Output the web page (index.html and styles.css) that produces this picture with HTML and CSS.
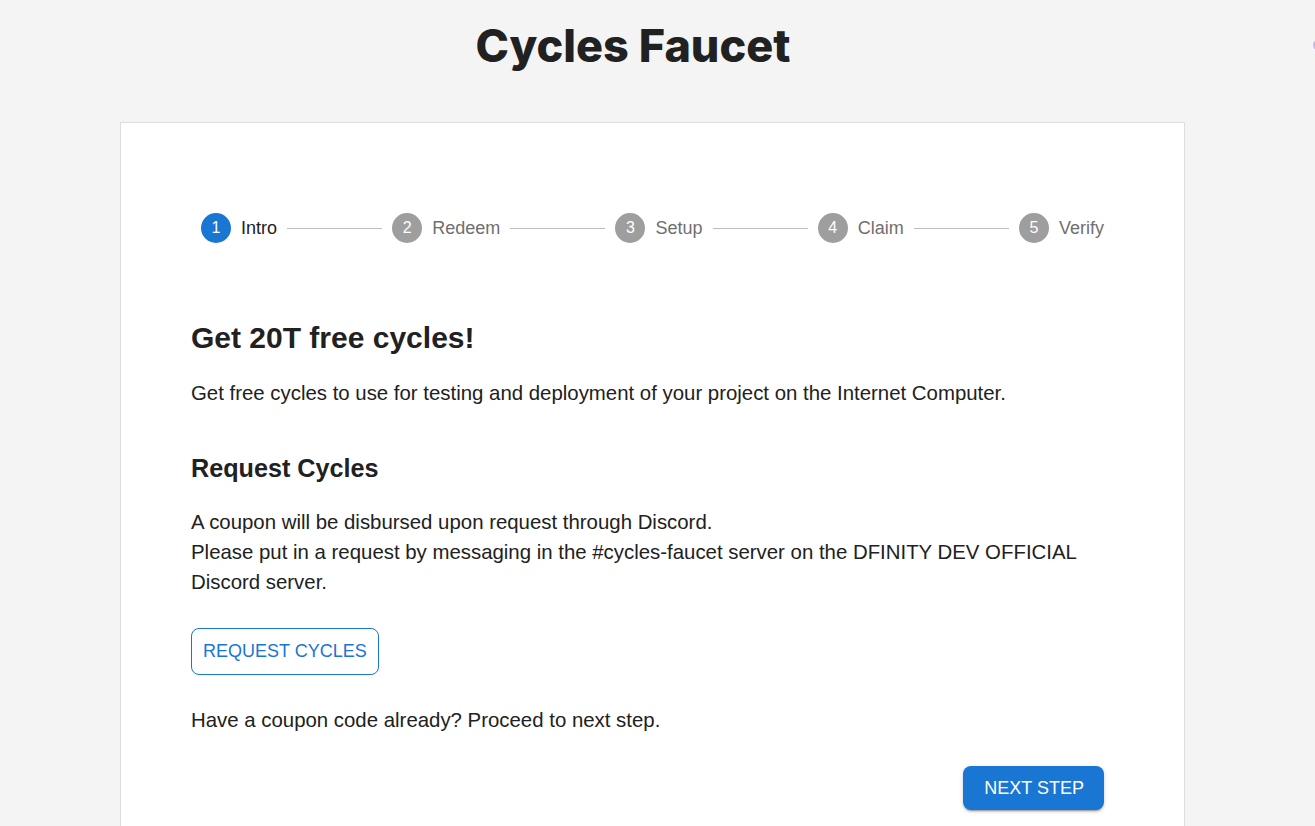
FILE: index.html
```html
<!DOCTYPE html>
<html lang="en">
<head>
<meta charset="utf-8">
<title>Cycles Faucet</title>
<link rel="stylesheet" href="styles.css">
</head>
<body>
<div class="edge-dot"></div>
<header class="top">
  <h1 class="title">Cycles Faucet</h1>
</header>
<main class="card">
  <div class="stepper">
    <div class="step active"><span class="num">1</span><span class="label">Intro</span></div>
    <div class="connector"></div>
    <div class="step"><span class="num">2</span><span class="label">Redeem</span></div>
    <div class="connector"></div>
    <div class="step"><span class="num">3</span><span class="label">Setup</span></div>
    <div class="connector"></div>
    <div class="step"><span class="num">4</span><span class="label">Claim</span></div>
    <div class="connector"></div>
    <div class="step"><span class="num">5</span><span class="label">Verify</span></div>
  </div>
  <h2 class="headline">Get 20T free cycles!</h2>
  <p class="lead">Get free cycles to use for testing and deployment of your project on the Internet Computer.</p>
  <h3 class="subhead">Request Cycles</h3>
  <p class="body">A coupon will be disbursed upon request through Discord.<br>Please put in a request by messaging in the #cycles-faucet server on the DFINITY DEV OFFICIAL Discord server.</p>
  <button class="btn-outline">REQUEST CYCLES</button>
  <p class="note">Have a coupon code already? Proceed to next step.</p>
  <div class="actions">
    <button class="btn-primary">NEXT STEP</button>
  </div>
</main>
</body>
</html>
```
FILE: styles.css
```css
html, body {
  margin: 0;
  padding: 0;
}
body {
  background: #f4f4f4;
  font-family: "Liberation Sans", Arial, sans-serif;
  color: #212121;
  overflow: hidden;
  height: 826px;
}
.edge-dot {
  position: absolute;
  left: 1313px;
  top: 40px;
  width: 8px;
  height: 10px;
  border-radius: 50%;
  background: #c9b8e6;
}
.top {
  height: 122px;
  display: flex;
  justify-content: center;
  padding-right: 49px;
}
.title {
  margin: 16px 0 0;
  font-family: Inter, "Open Sans", sans-serif;
  font-weight: 800;
  font-size: 45px;
  line-height: 60px;
  color: #212121;
}
.card {
  margin: 0 0 0 120px;
  width: 1065px;
  box-sizing: border-box;
  background: #fff;
  border: 1px solid #dedede;
  border-bottom: none;
  padding: 90px 70px 40px 70px;
  min-height: 720px;
}
.stepper {
  display: flex;
  align-items: center;
  height: 30px;
}
.step {
  display: flex;
  align-items: center;
  padding: 0 10px;
}
.num {
  width: 30px;
  height: 30px;
  border-radius: 50%;
  background: #9e9e9e;
  color: #fff;
  font-size: 16px;
  display: flex;
  align-items: center;
  justify-content: center;
  margin-right: 10px;
}
.label {
  font-size: 18px;
  color: #6f6f6f;
}
.step.active .num {
  background: #1976d2;
}
.step.active .label {
  color: #212121;
}
.connector {
  flex: 1;
  border-top: 1px solid #bdbdbd;
}
.headline {
  margin: 77px 0 0;
  font-size: 30px;
  line-height: 36px;
  font-weight: 700;
}
.lead {
  margin: 22px 0 0;
  font-size: 20.4px;
  line-height: 30px;
}
.subhead {
  margin: 45px 0 0;
  font-size: 25.2px;
  line-height: 30px;
  font-weight: 700;
}
.body {
  margin: 24px 0 0;
  font-size: 20.4px;
  line-height: 30px;
}
.btn-outline {
  display: block;
  margin-top: 31px;
  height: 47px;
  padding: 0 11px;
  background: #fff;
  border: 1px solid #1976d2;
  border-radius: 8px;
  color: #1976d2;
  font-family: "Liberation Sans", Arial, sans-serif;
  font-size: 18px;
}
.note {
  margin: 30px 0 0;
  font-size: 20.4px;
  line-height: 30px;
}
.actions {
  display: flex;
  justify-content: flex-end;
  margin-top: 31px;
  padding-right: 10px;
}
.btn-primary {
  height: 44px;
  padding: 0 20px 0 21px;
  background: #1976d2;
  color: #fff;
  border: none;
  border-radius: 8px;
  font-family: "Liberation Sans", Arial, sans-serif;
  font-size: 18px;
  box-shadow: 0 3px 1px -2px rgba(0,0,0,0.2), 0 2px 2px 0 rgba(0,0,0,0.14), 0 1px 5px 0 rgba(0,0,0,0.12);
}
```
